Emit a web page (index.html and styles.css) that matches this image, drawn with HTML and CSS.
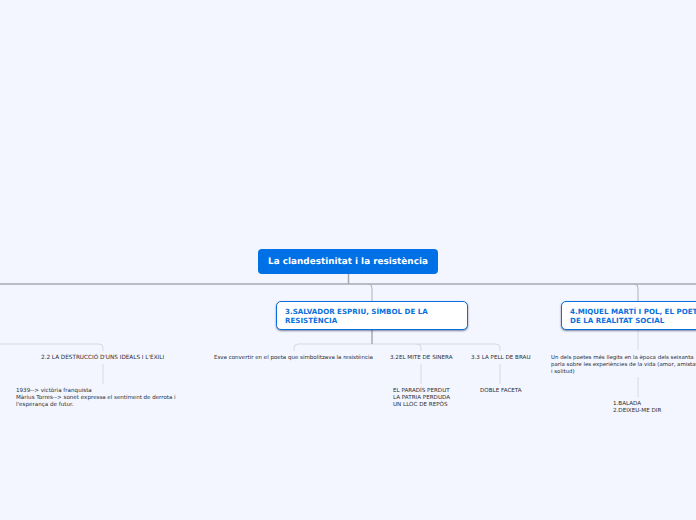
FILE: index.html
```html
<!DOCTYPE html>
<html lang="ca">
<head>
<meta charset="utf-8">
<title>La clandestinitat i la resistència</title>
<link rel="stylesheet" href="styles.css">
</head>
<body>
<main class="canvas">
  <svg class="links" width="696" height="520" viewBox="0 0 696 520" fill="none">
    <path class="sub" d="M294 351V348Q294 344 298 344H417Q421 344 421 348V351M417 344H496Q500 344 500 348V351"/>
    <path class="sub" d="M0 344H99Q103 344 103 348V351"/>
    <path class="sub" d="M103 364V384M421 364V384M500 364V384M638 330V350M638 377V397"/>
    <path class="main" d="M348.500 274V284M0 284H696"/>
    <path class="main" d="M372 330V344"/>
    <path class="main-thin" d="M368 284Q372 284 372 288V301M634 284Q638 284 638 288V301"/>
  </svg>

  <div class="root">La clandestinitat i la resistència</div>

  <div class="card card-3">3.SALVADOR ESPRIU, SÍMBOL DE LA RESISTÈNCIA</div>
  <div class="card card-4">4.MIQUEL MARTÍ I POL, EL POETA<br>DE LA REALITAT SOCIAL</div>

  <p class="leaf n22">2.2 LA DESTRUCCIÓ D'UNS IDEALS I L'EXILI</p>
  <p class="leaf n1939">1939--&gt; victòria franquista<br>Màrius Torres--&gt; sonet exp<br>l'esperança de futur.</p>
  <p class="leaf npressa">ressa el sentiment de derrota i</p>
  <p class="leaf nesva">Esva convertir en el poeta que simbolitzava la resistència</p>
  <p class="leaf n32">3.2EL MITE DE SINERA</p>
  <p class="leaf n33">3.3 LA PELL DE BRAU</p>
  <p class="leaf nparadis">EL PARADÍS PERDUT<br>LA PATRIA PERDUDA<br>UN LLOC DE REPÒS</p>
  <p class="leaf ndoble">DOBLE FACETA</p>
  <p class="leaf nundels">Un dels poetes més llegits en la època dels seixanta<br>parla sobre les experiències de la vida (amor, amistat<br>i solitud)</p>
  <p class="leaf nbalada">1.BALADA<br>2.DEIXEU-ME DIR</p>
</main>
</body>
</html>
```
FILE: styles.css
```css
html, body {
  margin: 0;
  padding: 0;
  background: #f3f6ff;
}
.canvas {
  position: relative;
  width: 696px;
  height: 520px;
  overflow: hidden;
  background: #f3f6ff;
  font-family: "DejaVu Sans", sans-serif;
  text-rendering: geometricPrecision;
}
.links {
  position: absolute;
  left: 0;
  top: 0;
}
.main { stroke: #a9a9b2; stroke-width: 1.5; }
.main-thin { stroke: #b0b0b8; stroke-width: 1; }
.sub { stroke: #d6d8e2; stroke-width: 1; }
.root {
  position: absolute;
  left: 258px;
  top: 249px;
  width: 180px;
  height: 25px;
  line-height: 27px;
  text-align: center;
  border-radius: 4px;
  background: #0070e6;
  color: #fff;
  font-weight: 700;
  font-size: 8.85px;
  white-space: nowrap;
}
.card {
  position: absolute;
  top: 301px;
  height: 29px;
  box-sizing: border-box;
  padding: 5px 8px;
  border: 1px solid #0a70dc;
  border-radius: 5px;
  background: #fff;
  box-shadow: 0 1px 2px rgba(40, 50, 80, .6);
  color: #0a70dc;
  font-weight: 700;
  font-size: 7.1px;
  line-height: 9px;
}
.card-3 { left: 276px; width: 192px; }
.card-4 { left: 561px; width: 220px; white-space: nowrap; }
.leaf {
  position: absolute;
  margin: 0;
  color: #2a2c34;
  font-size: 5.6px;
  line-height: 7px;
  white-space: nowrap;
}
.n22 { left: 41px; top: 355px; font-size: 5.7px; }
.n1939 { left: 16px; top: 388px; }
.npressa { left: 91px; top: 395px; font-size: 5.5px; }
.nesva { left: 214px; top: 355px; font-size: 5.5px; }
.n32 { left: 390px; top: 355px; }
.n33 { left: 471px; top: 355px; }
.nparadis { left: 393px; top: 388px; }
.ndoble { left: 480px; top: 388px; }
.nundels { left: 551px; top: 355px; font-size: 5.45px; }
.nbalada { left: 613px; top: 401px; }
```
